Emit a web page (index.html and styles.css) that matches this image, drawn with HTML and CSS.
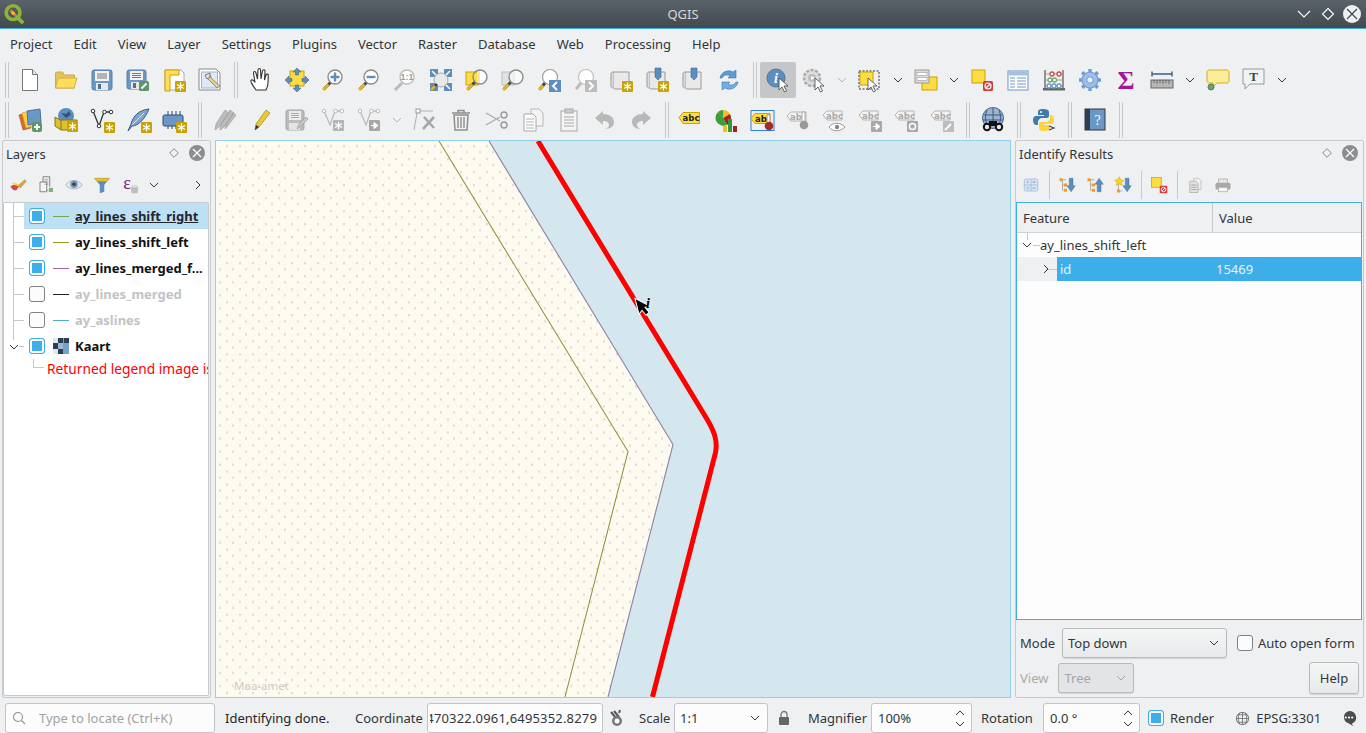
FILE: index.html
```html
<!DOCTYPE html>
<html lang="en">
<head>
<meta charset="utf-8">
<title>QGIS</title>
<link rel="stylesheet" href="styles.css">
</head>
<body>
<svg class="defs" aria-hidden="true">
  <defs>
    <g id="bd"><rect width="11" height="11" rx="1" fill="#c9a208"/><path d="M5.5 1.5v8M2 3.5l7 4M9 3.5l-7 4" stroke="#fff" stroke-width="1.3"/></g>
    <g id="bdg"><rect width="11" height="11" rx="1" fill="#b4b4b4"/><path d="M5.5 1.5v8M2 3.5l7 4M9 3.5l-7 4" stroke="#fff" stroke-width="1.3"/></g>
    <g id="mag"><path d="M10 14L3 21" stroke="#444" stroke-width="3"/><path d="M7.5 16.5L2 22" stroke="#e2b52a" stroke-width="3"/><circle cx="14" cy="9" r="7" fill="#fff" stroke="#8c8c8c" stroke-width="1.4"/></g>
    <g id="magg"><path d="M9 15L2 22" stroke="#bbb" stroke-width="3"/><circle cx="14" cy="9" r="7" fill="#fff" stroke="#bcbcbc" stroke-width="1.4"/></g>
    <g id="cur"><path d="M0 0v12l3-3 2.5 5 2-1-2.5-5h4z" fill="#fff" stroke="#444" stroke-width=".8"/></g>
    <g id="scroll"><path d="M4 4h16v17H7c-2 0-3-1-3-2z" fill="#e9e9e9" stroke="#999"/><path d="M4 4c-1 0-2 1-2 2v12c0 1 1 2 2 2" fill="#ddd" stroke="#999"/></g>
    <g id="tag"><path d="M1 9l4-4h15v9H5z" fill="#f3f3f3" stroke="#b4b4b4"/></g>
  </defs>
  <symbol id="new" viewBox="0 0 24 24"><path d="M4.5 1.5h10l5 5v16h-15z" fill="#fff" stroke="#777"/><path d="M14.5 1.5v5h5" fill="#e4e4e4" stroke="#777"/></symbol>
  <symbol id="open" viewBox="0 0 24 24"><path d="M1.5 5V20h19V7h-10l-2-3h-6z" fill="#e5c35a" stroke="#c9a94e"/><path d="M4 10h19l-3 10H1.5z" fill="#ffdc5c" stroke="#d1b04d"/></symbol>
  <symbol id="save" viewBox="0 0 24 24"><rect x="2" y="2" width="20" height="20" rx="2" fill="#6a97c6" stroke="#5a7ea6"/><rect x="5" y="3" width="14" height="10" fill="#f2f2f2"/><path d="M7 6h10M7 8h10M7 10h10" stroke="#777"/><rect x="6" y="15" width="12" height="7" fill="#e8e8e8"/><rect x="8" y="16" width="3" height="5" fill="#4f6f94"/></symbol>
  <symbol id="saveas" viewBox="0 0 24 24"><rect x="1" y="2" width="19" height="19" rx="2" fill="#6a97c6" stroke="#5a7ea6"/><rect x="4" y="3" width="13" height="9" fill="#f2f2f2"/><path d="M6 5.5h9M6 7.5h9M6 9.5h9" stroke="#777"/><rect x="5" y="14" width="11" height="7" fill="#e8e8e8"/><rect x="7" y="15" width="3" height="5" fill="#4f6f94"/><rect x="13" y="13" width="10" height="10" rx="1.5" fill="#5f9668"/><path d="M15.5 20.5l5-5" stroke="#fff" stroke-width="2"/></symbol>
  <symbol id="layoutnew" viewBox="0 0 24 24"><path d="M3 2h16l3 3v17H3z" fill="#fff" stroke="#aaa"/><path d="M3 2h14v5H8v16H3z" fill="#ffdc5c" stroke="#c9a208"/><use href="#bd" x="13" y="13"/></symbol>
  <symbol id="layouts" viewBox="0 0 24 24"><path d="M1 1h17l4 4v17H1z" fill="#fff" stroke="#888"/><rect x="3.5" y="4" width="16" height="16" fill="#dfe8f5" stroke="#9db3d8"/><path d="M12 7c-3 0-3 3-2 4l9 9 3-2-9-8c0-2-1-3-1-3z" fill="#e2d18f" stroke="#777" stroke-width=".8"/><path d="M7 7l5-2v4l-3 2z" fill="#ddd" stroke="#666" stroke-width=".8"/></symbol>
  <symbol id="pan" viewBox="0 0 24 24"><path d="M7 22c-2-3-6-8-5-9.500s3 0 4 2L4.500 5c0-2 2-2 2.500 0l1.500 6 .5-9c.3-2 2.500-2 2.500 0l.5 9 1.500-8c.5-2 2.500-1.500 2.500 0l-.5 9 1.500-5c.5-1.500 2.500-1 2.300 .5L19 15c0 3-1 5-2 7z" fill="#fff" stroke="#333" stroke-width="1.1"/></symbol>
  <symbol id="pansel" viewBox="0 0 24 24"><rect x="5" y="3" width="14" height="15" fill="#ffdc40" stroke="#c9a208"/><path d="M12 0l4 4h-2.500v3h-3V4H8zM12 24l-4-4h2.500v-3h3v3H16zM0 12l4-4v2.500h3v3H4V16zM24 12l-4 4v-2.500h-3v-3h3V8z" fill="#5d8ec0" stroke="#41698f" stroke-width=".6"/></symbol>
  <symbol id="zin" viewBox="0 0 24 24"><use href="#mag"/><path d="M14 4.5v9M9.5 9h9" stroke="#5d8ec0" stroke-width="2.400"/></symbol>
  <symbol id="zout" viewBox="0 0 24 24"><use href="#mag"/><path d="M9.5 9h9" stroke="#5d8ec0" stroke-width="2.400"/></symbol>
  <symbol id="zfull" viewBox="0 0 24 24"><path d="M1 1h8v8H1zM15 1h8v8h-8zM15 15h8v8h-8zM1 15h8v8H1z" fill="#5d8ec0"/><path d="M3 3l5 5M21 3l-5 5M21 21l-5-5" stroke="#fff" stroke-width="1.5"/><circle cx="12" cy="12" r="7" fill="#e9e9e9" stroke="#aaa"/><path d="M8 16l-6 6" stroke="#444" stroke-width="3"/><path d="M6 18l-4 4" stroke="#e2b52a" stroke-width="3"/></symbol>
  <symbol id="zsel" viewBox="0 0 24 24"><rect x="1" y="4" width="12" height="13" fill="#ffdc40" stroke="#c9a208"/><path d="M10 14L3 21" stroke="#444" stroke-width="3"/><path d="M7.5 16.5L2 22" stroke="#e2b52a" stroke-width="3"/><path d="M15 2.500a6.500 6.500 0 0 1 0 13z" fill="#fff"/><path d="M15 2.500a6.500 6.500 0 0 0 -3 .7v11.600a6.500 6.500 0 0 0 3 .7z" fill="#f3e7b0"/><circle cx="15" cy="9" r="7" fill="none" stroke="#8c8c8c" stroke-width="1.4"/></symbol>
  <symbol id="zlay" viewBox="0 0 24 24"><rect x="1" y="4" width="12" height="13" fill="#e2e2e2" stroke="#bbb"/><path d="M10 14L3 21" stroke="#444" stroke-width="3"/><path d="M7.5 16.5L2 22" stroke="#e2b52a" stroke-width="3"/><circle cx="15" cy="9" r="7" fill="#fff" fill-opacity=".6" stroke="#8c8c8c" stroke-width="1.4"/></symbol>
  <symbol id="zlast" viewBox="0 0 24 24"><path d="M8 15L3 21" stroke="#444" stroke-width="3"/><path d="M6 17.5L2 22" stroke="#e2b52a" stroke-width="3"/><circle cx="13" cy="9" r="7.5" fill="#fff" stroke="#9c9c9c" stroke-width="1.2"/><rect x="12" y="12" width="12" height="12" fill="#5d8ec0"/><path d="M20 14l-4 4 4 4" fill="none" stroke="#fff" stroke-width="2"/></symbol>
  <symbol id="znext" viewBox="0 0 24 24"><path d="M8 15L3 21" stroke="#bbb" stroke-width="3"/><circle cx="13" cy="9" r="7.5" fill="#fff" stroke="#c0c0c0" stroke-width="1.2"/><rect x="12" y="12" width="12" height="12" fill="#bcbcbc"/><path d="M16 14l4 4-4 4" fill="none" stroke="#fff" stroke-width="2"/></symbol>
  <symbol id="mapnew" viewBox="0 0 24 24"><use href="#scroll"/><use href="#bd" x="13" y="13"/></symbol>
  <symbol id="map3d" viewBox="0 0 24 24"><use href="#scroll"/><path d="M10 0h6v9l-3 3-3-3z" fill="#5d8ec0" stroke="#41698f" stroke-width=".6"/><use href="#bd" x="13" y="13"/></symbol>
  <symbol id="book" viewBox="0 0 24 24"><use href="#scroll"/><path d="M10 0h6v9l-3 3-3-3z" fill="#5d8ec0" stroke="#41698f" stroke-width=".6"/></symbol>
  <symbol id="refresh" viewBox="0 0 24 24"><path d="M3 10c1-6 8-9 13-6l3-2v8h-8l2-2c-3-2-6-1-8 2z" fill="#5d9bd6" stroke="#3f75ad" stroke-width=".6"/><path d="M21 14c-1 6-8 9-13 6l-3 2v-8h8l-2 2c3 2 6 1 8-2z" fill="#6faee2" stroke="#3f75ad" stroke-width=".6"/></symbol>
  <symbol id="idbase" viewBox="0 0 24 24"><circle cx="10" cy="10" r="9" fill="#5d8ec0" stroke="#4a739e"/></symbol>
  <symbol id="action" viewBox="0 0 24 24"><circle cx="10" cy="10" r="8" fill="#ddd" stroke="#aaa" stroke-width="2.500" stroke-dasharray="3 1.5"/><circle cx="10" cy="10" r="4" fill="#bbb"/><path d="M9 8l4 2-4 2z" fill="#fff"/><use href="#cur" x="13" y="10"/></symbol>
  <symbol id="select" viewBox="0 0 24 24"><rect x="1" y="3" width="20" height="18" fill="none" stroke="#333" stroke-dasharray="2 1.5"/><rect x="2" y="4" width="13" height="13" fill="#ffdc40" stroke="#c9a208"/><use href="#cur" x="10" y="10"/></symbol>
  <symbol id="selval" viewBox="0 0 24 24"><rect x="8" y="9" width="15" height="13" fill="#ffdc40" stroke="#c9a208"/><rect x="1" y="2" width="14" height="13" fill="#ddd" stroke="#999"/><rect x="3" y="4.5" width="10" height="3" fill="#fff" stroke="#999" stroke-width=".6"/><rect x="3" y="9.500" width="10" height="3" fill="#fff" stroke="#999" stroke-width=".6"/></symbol>
  <symbol id="desel" viewBox="0 0 24 24"><rect x="2" y="2" width="13" height="13" fill="#ffdc40" stroke="#c9a208"/><rect x="13" y="13" width="10" height="10" rx="1.5" fill="#d43c3c"/><circle cx="18" cy="18" r="3" fill="none" stroke="#fff" stroke-width="1.2"/><path d="M16 20l4-4" stroke="#fff" stroke-width="1.2"/></symbol>
  <symbol id="table" viewBox="0 0 24 24"><rect x="2" y="3" width="20" height="19" fill="#fff" stroke="#6a97c6"/><path d="M2.5 3.5h19v4h-19z" fill="#a4c1e0"/><path d="M4 10h5M11 10h9M4 13h5M11 13h9M4 16h5M11 16h9M4 19h5M11 19h9" stroke="#6a97c6"/></symbol>
  <symbol id="calc" viewBox="0 0 24 24"><path d="M3 2v19M21 2v19" stroke="#555" stroke-width="1.2"/><rect x="1" y="20" width="22" height="2.5" fill="#666"/><path d="M3 6h18M3 12h18M3 18h18" stroke="#888" stroke-width=".8"/><g fill="#fff" stroke-width="1.3"><circle cx="10" cy="6" r="2" stroke="#cc4c4c"/><circle cx="17" cy="6" r="2" stroke="#cc4c4c"/><circle cx="8" cy="12" r="2" stroke="#6fae6f"/><circle cx="12.5" cy="12" r="2" stroke="#6fae6f"/><circle cx="7" cy="18" r="2" stroke="#6a97c6"/><circle cx="12" cy="18" r="2" stroke="#6a97c6"/><circle cx="17" cy="18" r="2" stroke="#6a97c6"/></g></symbol>
  <symbol id="gear" viewBox="0 0 24 24"><path d="M12 1v22M1 12h22M4.200 4.200l15.600 15.600M19.800 4.200L4.200 19.800" stroke="#6f9bd6" stroke-width="3.400"/><circle cx="12" cy="12" r="8" fill="#9dbde6" stroke="#6f9bd6" stroke-width="1.2"/><circle cx="12" cy="12" r="3.2" fill="#e6eef8" stroke="#6f9bd6"/></symbol>
  <symbol id="ruler" viewBox="0 0 24 24"><path d="M2 6h20M2 3.5v5M22 3.5v5" stroke="#3c5e86" stroke-width="1.4"/><rect x="1" y="12" width="22" height="8" fill="#b6b6b6" stroke="#666"/><path d="M4 12v3M7 12v4M10 12v3M13 12v4M16 12v3M19 12v4" stroke="#555" stroke-width=".8"/></symbol>
  <symbol id="note" viewBox="0 0 24 24"><path d="M3 2h18c1 0 2 1 2 2v9c0 1-1 2-2 2H11l-4 4v-4H3c-1 0-2-1-2-2V4c0-1 1-2 2-2z" fill="#fdec98" stroke="#cdb024"/><circle cx="5" cy="19" r="3" fill="#6fa36f" stroke="#4e7d4e"/></symbol>
  <symbol id="tnotebase" viewBox="0 0 24 24"><path d="M1 1h21v15H8l-5 5v-5H1z" fill="#eef4f6" stroke="#999"/></symbol>
  <symbol id="dsm" viewBox="0 0 24 24"><path d="M1 7l8-2 4 15-8 2z" fill="#d86a35" stroke="#a64e26" stroke-width=".6"/><path d="M4 5l8-2 4 15-8 2z" fill="#ffd24a" stroke="#c9a208" stroke-width=".6"/><path d="M9 3l13-2 1 13-13 3z" fill="#6a97c6" stroke="#4a739e"/><rect x="14" y="14" width="10" height="10" rx="2" fill="#5f9668"/><path d="M19 16v6M16 19h6" stroke="#fff" stroke-width="2"/></symbol>
  <symbol id="gpkg" viewBox="0 0 24 24"><circle cx="12" cy="8" r="8" fill="#5d8ec0"/><path d="M7 5l5 1 3-3 2 4-5 3z" fill="#35567c"/><path d="M1 9l5 3h17v10H7l-6-4z" fill="#e0c030" stroke="#8a7414"/><path d="M7 12v10" stroke="#8a7414"/><use href="#bd" x="13" y="13"/></symbol>
  <symbol id="shp" viewBox="0 0 24 24"><path d="M3 3l6 15 5-14h7" fill="none" stroke="#333" stroke-width="1.3"/><g fill="#fff" stroke="#333"><circle cx="3" cy="3" r="1.8"/><circle cx="9" cy="18" r="1.8"/><circle cx="14.5" cy="4" r="1.8"/><circle cx="21" cy="4" r="1.8"/></g><use href="#bd" x="14" y="14"/></symbol>
  <symbol id="feather" viewBox="0 0 24 24"><path d="M23 1C13 2 7 8 5 16l-3 7 4-5c6 0 13-7 17-17z" fill="#7ea4ce" stroke="#355a86"/><path d="M18 5L6 17" stroke="#dde8f3"/><use href="#bd" x="15" y="14"/></symbol>
  <symbol id="chip" viewBox="0 0 24 24"><path d="M6 3v18M10 3v18M14 3v18M18 3v18" stroke="#2d4d72"/><rect x="1" y="7" width="20" height="11" rx="1.5" fill="#6a97c6" stroke="#2d4d72"/><use href="#bd" x="14" y="14"/></symbol>
  <symbol id="pencils" viewBox="0 0 24 24"><path d="M2 22l1-6L12 2l4 3L6 19zM7 22l1-6L17 2l4 3-10 14zM12 21l1-5 7-11 3 2-9 12z" fill="#bcbcbc" stroke="#a0a0a0" stroke-width=".7"/></symbol>
  <symbol id="pen" viewBox="0 0 24 24"><path d="M6 22l1-6L17 2l4 3L10 19z" fill="#ebc935" stroke="#a98f22" stroke-width=".8"/><path d="M6 22l1-5 3 2z" fill="#333"/></symbol>
  <symbol id="saveg" viewBox="0 0 24 24"><rect x="1" y="2" width="18" height="20" rx="2" fill="#bcbcbc" stroke="#a6a6a6"/><rect x="4" y="3" width="12" height="9" fill="#ececec"/><path d="M6 5.5h8M6 7.5h8M6 9.5h8" stroke="#aaa"/><rect x="4" y="15" width="11" height="7" fill="#e4e4e4"/><path d="M12 21l2-5 7-7 2 2-7 7z" fill="#c8c8c8" stroke="#999" stroke-width=".7"/></symbol>
  <symbol id="addf" viewBox="0 0 24 24"><path d="M3 3l6 14 5-14h7" fill="none" stroke="#bbb" stroke-width="1.3"/><g fill="#fff" stroke="#bbb"><circle cx="3" cy="3" r="1.8"/><circle cx="14.5" cy="3" r="1.8"/><circle cx="21" cy="3" r="1.8"/></g><use href="#bdg" x="12" y="12"/></symbol>
  <symbol id="movef" viewBox="0 0 24 24"><path d="M3 3l6 14 5-14h7" fill="none" stroke="#bbb" stroke-width="1.3"/><g fill="#fff" stroke="#bbb"><circle cx="3" cy="3" r="1.8"/><circle cx="14.5" cy="3" r="1.8"/><circle cx="21" cy="3" r="1.8"/></g><rect x="12" y="12" width="11" height="11" rx="1" fill="#a8a8a8"/><path d="M14 17.5h3v-3l4 3-4 3v-3" fill="#fff" stroke="#fff"/></symbol>
  <symbol id="vertex" viewBox="0 0 24 24"><path d="M6 3h14M4 5L1 22" stroke="#b0b0b0"/><rect x="3" y="1" width="4" height="4" fill="#fff" stroke="#999"/><path d="M11 9l10 11M21 9L10 21" stroke="#a8a8a8" stroke-width="2.600"/></symbol>
  <symbol id="trash" viewBox="0 0 24 24"><path d="M3 5h18M9 5V2.500h6V5" fill="none" stroke="#8e8e8e" stroke-width="1.5"/><path d="M5 7h14l-1 15H6z" fill="#f0f0f0" stroke="#8e8e8e" stroke-width="1.5"/><path d="M9 9v11M12 9v11M15 9v11" stroke="#8e8e8e" stroke-width="1.4"/></symbol>
  <symbol id="cut" viewBox="0 0 24 24"><path d="M1 5l14 8M1 17l14-8" stroke="#adadad" stroke-width="1.4"/><circle cx="19" cy="7" r="3" fill="none" stroke="#9a9a9a" stroke-width="1.4"/><circle cx="19" cy="17" r="3" fill="none" stroke="#9a9a9a" stroke-width="1.4"/></symbol>
  <symbol id="copy" viewBox="0 0 24 24"><path d="M10 1h8l4 4v13H10z" fill="#f4f4f4" stroke="#b8b8b8"/><path d="M3 6h9l3 3v14H3z" fill="#fff" stroke="#a8a8a8"/><path d="M5 11h8M5 14h8M5 17h8M5 20h8" stroke="#b0b0b0"/></symbol>
  <symbol id="paste" viewBox="0 0 24 24"><rect x="4" y="3" width="16" height="20" fill="#f4f4f4" stroke="#a8a8a8"/><rect x="8" y="1" width="8" height="4" fill="#ccc" stroke="#a8a8a8"/><path d="M7 9h10M7 12h10M7 15h10M7 18h10" stroke="#aaa"/></symbol>
  <symbol id="undo" viewBox="0 0 24 24"><path d="M10 3L2 10l8 7v-4c4 0 6 2 6 4 0 3-4 4-4 4 6 0 9-3 9-7 0-5-5-8-11-8z" fill="#b8b8b8"/></symbol>
  <symbol id="redo" viewBox="0 0 24 24"><path d="M14 3l8 7-8 7v-4c-4 0-6 2-6 4 0 3 4 4 4 4-6 0-9-3-9-7 0-5 5-8 11-8z" fill="#b8b8b8"/></symbol>
  <symbol id="abctag" viewBox="0 0 24 24"><path d="M1 9.500l4-5h16.500v11H5z" fill="#ffdc40" stroke="#c9a208"/></symbol>
  <symbol id="diagram" viewBox="0 0 24 24"><path d="M9 10V2a7.500 7.500 0 0 1 7 4z" fill="#f0c020"/><path d="M9 10l7-4a8 8 0 0 1-3 11z" fill="#a52020"/><path d="M9 10l4 7A8 8 0 0 1 4 4z" fill="#3d9c3d"/><path d="M9 10L4 4a8 8 0 0 1 5-2z" fill="#3d9c3d"/><rect x="9" y="18" width="4" height="6" fill="#f0c020"/><rect x="14" y="11" width="4" height="13" fill="#2d9a3d"/><rect x="19" y="18" width="4" height="6" fill="#a52020"/></symbol>
  <symbol id="abpinb" viewBox="0 0 24 24"><rect x="1" y="2.500" width="23" height="20" fill="none" stroke="#2f7fe0"/><path d="M1 10.500l4-5h15v10H5z" fill="#ffdc40" stroke="#c9a208"/><path d="M17 7h3v9h-3z" fill="#fff" stroke="#999"/><circle cx="19" cy="18" r="4.300" fill="#a52a2a"/></symbol>
  <symbol id="abgb" viewBox="0 0 24 24"><use href="#tag" y="-1"/><path d="M16 4h3v11h-3z" fill="#fff" stroke="#aaa"/><circle cx="18" cy="17" r="4.300" fill="#999"/></symbol>
  <symbol id="abceyeb" viewBox="0 0 24 24"><use href="#tag" y="-2"/><path d="M7 19c4-5 11-5 16 0-5 5-12 5-16 0z" fill="#fff" stroke="#999"/><circle cx="15" cy="19" r="2.200" fill="#888"/></symbol>
  <symbol id="abcmoveb" viewBox="0 0 24 24"><use href="#tag" y="-2"/><rect x="13" y="13" width="11" height="11" rx="1" fill="#a8a8a8"/><path d="M15 18.500h3v-3l4 3-4 3v-3" fill="#fff" stroke="#fff"/></symbol>
  <symbol id="abcrotb" viewBox="0 0 24 24"><use href="#tag" y="-2"/><rect x="13" y="13" width="11" height="11" rx="1" fill="#a8a8a8"/><circle cx="18.500" cy="18.500" r="3" fill="none" stroke="#fff" stroke-width="1.5"/></symbol>
  <symbol id="abcpenb" viewBox="0 0 24 24"><use href="#tag" y="-2"/><rect x="13" y="13" width="11" height="11" rx="1" fill="#bcbcbc"/><path d="M15 22l6-6" stroke="#fff" stroke-width="2"/></symbol>
  <symbol id="meta" viewBox="0 0 24 24"><circle cx="12" cy="10" r="10.500" fill="#9ab4d2" stroke="#46648a"/><path d="M3 7h18M2 12h20M12 0v18M6 2c-2 5-2 11 0 15M18 2c2 5 2 11 0 15" stroke="#3a5a80" stroke-width="1" fill="none"/><circle cx="6" cy="19" r="4.200" fill="#111"/><circle cx="18" cy="19" r="4.200" fill="#111"/><path d="M8 13h8v5H8z" fill="#111"/><circle cx="6" cy="19" r="2.200" fill="#e8e8e8"/><circle cx="18" cy="19" r="2.200" fill="#e8e8e8"/></symbol>
  <symbol id="python" viewBox="0 0 24 24"><path d="M11 1c-4 0-5 1-5 3v3h6v1H4c-2 0-3 2-3 4s1 5 3 5h2v-3c0-2 2-4 4-4h5c1 0 2-1 2-2V4c0-2-2-3-6-3z" fill="#3f7cad"/><path d="M12 23c4 0 6-1 6-3v-3h-6v-1h7c2 0 3-2 3-4s-1-5-3-5h-1v3c0 2-2 4-4 4H9c-1 0-2 1-2 2v4c0 2 1 3 5 3z" fill="#ffd43b"/><circle cx="9" cy="4" r="1" fill="#fff"/><path d="M17 18l5 2-5 2" fill="none" stroke="#444" stroke-width="1.2"/></symbol>
  <symbol id="helpb" viewBox="0 0 24 24"><rect x="2" y="1" width="20" height="21" fill="#6a97c6" stroke="#31363b"/><rect x="2" y="1" width="5" height="21" fill="#2c3e50"/></symbol>
  <symbol id="collapse" viewBox="0 0 24 24"><rect x="3" y="4" width="18" height="16" rx="2" fill="#d7e4f2" stroke="#9db8d6"/><path d="M12 4v16M3 12h18" stroke="#9db8d6"/><path d="M6 8h3M6 16h3M14 8h4M14 16h4" stroke="#5d8ec0"/></symbol>
  <symbol id="expandall" viewBox="0 0 24 24"><path d="M3 5h8M6 5v14h5M6 12h5" fill="none" stroke="#999"/><rect x="2" y="3" width="4" height="4" fill="#f59a2c"/><rect x="8" y="10" width="4" height="4" fill="#f59a2c"/><rect x="8" y="17" width="4" height="4" fill="#f59a2c"/><path d="M15 3h5v10h3l-5.500 8L12 13h3z" fill="#5d8ec0" stroke="#41698f" stroke-width=".6"/></symbol>
  <symbol id="collapseall" viewBox="0 0 24 24"><path d="M3 5h8M6 5v14h5M6 12h5" fill="none" stroke="#999"/><rect x="2" y="3" width="4" height="4" fill="#f59a2c"/><rect x="8" y="10" width="4" height="4" fill="#f59a2c"/><rect x="8" y="17" width="4" height="4" fill="#f59a2c"/><path d="M15 21h5V11h3L17.500 3 12 11h3z" fill="#5d8ec0" stroke="#41698f" stroke-width=".6"/></symbol>
  <symbol id="expandnew" viewBox="0 0 24 24"><path d="M6 8v12h5" fill="none" stroke="#999"/><rect x="4" y="18" width="4" height="4" fill="#f59a2c"/><path d="M7 1l2 4 4 .5-3 3 1 4-4-2-4 2 1-4-3-3 4-.5z" fill="#ffd21e" stroke="#c9a208" stroke-width=".6"/><path d="M15 3h5v10h3l-5.500 8L12 13h3z" fill="#5d8ec0" stroke="#41698f" stroke-width=".6"/></symbol>
  <symbol id="copyr" viewBox="0 0 24 24"><path d="M10 3h7l3 3v12H10z" fill="#eee" stroke="#bbb"/><path d="M5 7h8l3 3v12H5z" fill="#e2e2e2" stroke="#aaa"/><path d="M7 12h7M7 15h7M7 18h7" stroke="#999"/></symbol>
  <symbol id="print" viewBox="0 0 24 24"><path d="M6 4h12v6H6z" fill="#e6e6e6" stroke="#aaa"/><rect x="2" y="9" width="20" height="9" rx="2" fill="#a8a8a8"/><rect x="6" y="15" width="12" height="6" fill="#f4f4f4" stroke="#aaa"/></symbol>
  <symbol id="brush" viewBox="0 0 24 24"><path d="M2 14c4-3 8-3 11 0l-3 5c-3 0-6-1-8-5z" fill="#e34234"/><path d="M2 14c3 2 5 4 8 5l-4 0z" fill="#4a7fc0"/><path d="M12 13l9-8 2 2-8 9z" fill="#d9a93a" stroke="#a67c1d" stroke-width=".6"/><path d="M5 10l8 2" stroke="#ffd24a" stroke-width="2.500"/></symbol>
  <symbol id="addgroup" viewBox="0 0 24 24"><path d="M8 1h9v18H8z" fill="#eee" stroke="#666"/><path d="M4 8h9v13H4z" fill="#f4f4f4" stroke="#666"/><path d="M10 5h5M10 8h5M10 11h5" stroke="#888"/><rect x="15" y="15" width="7" height="7" fill="#7fb27f" stroke="#fff"/></symbol>
  <symbol id="eye" viewBox="0 0 24 24"><path d="M1 12c5-8 17-8 22 0-5 7-17 7-22 0z" fill="#e4e8ee" stroke="#a0a8b2"/><circle cx="12" cy="11" r="5" fill="#7a96b6"/><circle cx="12" cy="11" r="2.300" fill="#2d3f55"/></symbol>
  <symbol id="filter" viewBox="0 0 24 24"><path d="M2 3h20l-7 9v9l-6 2V12z" fill="#5d8ec0"/><path d="M2 3h20l-3 4H5z" fill="#f0c020" stroke="#b89414" stroke-width=".6"/></symbol>
  <symbol id="exprb" viewBox="0 0 24 24"><path d="M13 15h10l-1 8h-8z" fill="#bdbdbd"/><path d="M15 15v-2h6v2" fill="none" stroke="#bdbdbd"/></symbol>
</svg>

<header class="titlebar">
  <span class="title-left">
    <svg class="qlogo" viewBox="0 0 24 24"><circle cx="11" cy="10.500" r="7.500" fill="none" stroke="#8ab43a" stroke-width="4"/><path d="M14 14l8 8" stroke="#8ab43a" stroke-width="4"/><path d="M8 8l6 6" stroke="#e47b2a" stroke-width="3"/><circle cx="11" cy="11" r="2" fill="#e8c43a"/></svg>
  </span>
  <span class="title-text">QGIS</span>
  <span class="title-right">
    <svg class="wbtn" viewBox="0 0 16 16"><path d="M2 5l6 6 6-6" fill="none" stroke="#fff" stroke-width="1.1"/></svg>
    <svg class="wbtn" viewBox="0 0 16 16"><path d="M8 2.500L13.500 8 8 13.500 2.500 8z" fill="none" stroke="#fff" stroke-width="1.1"/></svg>
    <svg class="wclose" viewBox="0 0 18 18"><circle cx="9" cy="9" r="9" fill="#eff0f1"/><path d="M4 4l10 10M14 4L4 14" stroke="#3f464c" stroke-width="1.2"/></svg>
  </span>
</header>

<nav class="menubar">
  <span class="menu">Project</span><span class="menu">Edit</span><span class="menu">View</span><span class="menu">Layer</span><span class="menu">Settings</span><span class="menu">Plugins</span><span class="menu">Vector</span><span class="menu">Raster</span><span class="menu">Database</span><span class="menu">Web</span><span class="menu">Processing</span><span class="menu">Help</span>
</nav>

<div class="toolbar">
  <i class="grip first"></i>
  <span class="tb"><svg class="ic"><use href="#new"/></svg></span>
  <span class="tb"><svg class="ic"><use href="#open"/></svg></span>
  <span class="tb"><svg class="ic"><use href="#save"/></svg></span>
  <span class="tb"><svg class="ic"><use href="#saveas"/></svg></span>
  <span class="tb"><svg class="ic"><use href="#layoutnew"/></svg></span>
  <span class="tb"><svg class="ic"><use href="#layouts"/></svg></span>
  <i class="grip"></i>
  <span class="tb"><svg class="ic"><use href="#pan"/></svg></span>
  <span class="tb"><svg class="ic"><use href="#pansel"/></svg></span>
  <span class="tb"><svg class="ic"><use href="#zin"/></svg></span>
  <span class="tb"><svg class="ic"><use href="#zout"/></svg></span>
  <span class="tb"><svg class="ic"><use href="#magg"/><text x="14" y="12" class="t-11">1:1</text></svg></span>
  <span class="tb"><svg class="ic"><use href="#zfull"/></svg></span>
  <span class="tb"><svg class="ic"><use href="#zsel"/></svg></span>
  <span class="tb"><svg class="ic"><use href="#zlay"/></svg></span>
  <span class="tb"><svg class="ic"><use href="#zlast"/></svg></span>
  <span class="tb"><svg class="ic"><use href="#znext"/></svg></span>
  <span class="tb"><svg class="ic"><use href="#mapnew"/></svg></span>
  <span class="tb"><svg class="ic"><use href="#map3d"/></svg></span>
  <span class="tb"><svg class="ic"><use href="#book"/></svg></span>
  <span class="tb"><svg class="ic"><use href="#refresh"/></svg></span>
  <i class="grip tight"></i>
  <span class="tb active"><svg class="ic"><use href="#idbase"/><text x="10" y="15" class="t-i">i</text><use href="#cur" x="13" y="10"/></svg></span>
  <span class="tb"><svg class="ic"><use href="#action"/></svg></span>
  <span class="chev dim"><svg viewBox="0 0 10 6"><path d="M1 1l4 4 4-4"/></svg></span>
  <span class="tb"><svg class="ic"><use href="#select"/></svg></span>
  <span class="chev"><svg viewBox="0 0 10 6"><path d="M1 1l4 4 4-4"/></svg></span>
  <span class="tb"><svg class="ic"><use href="#selval"/></svg></span>
  <span class="chev"><svg viewBox="0 0 10 6"><path d="M1 1l4 4 4-4"/></svg></span>
  <span class="tb"><svg class="ic"><use href="#desel"/></svg></span>
  <span class="tb"><svg class="ic"><use href="#table"/></svg></span>
  <span class="tb"><svg class="ic"><use href="#calc"/></svg></span>
  <span class="tb"><svg class="ic"><use href="#gear"/></svg></span>
  <span class="tb"><svg class="ic"><text x="12" y="21" class="t-sigma">Σ</text></svg></span>
  <span class="tb"><svg class="ic"><use href="#ruler"/></svg></span>
  <span class="chev"><svg viewBox="0 0 10 6"><path d="M1 1l4 4 4-4"/></svg></span>
  <span class="tb"><svg class="ic"><use href="#note"/></svg></span>
  <span class="tb"><svg class="ic"><use href="#tnotebase"/><text x="11.500" y="13" class="t-t">T</text></svg></span>
  <span class="chev"><svg viewBox="0 0 10 6"><path d="M1 1l4 4 4-4"/></svg></span>
</div>

<div class="toolbar">
  <i class="grip first"></i>
  <span class="tb"><svg class="ic"><use href="#dsm"/></svg></span>
  <span class="tb"><svg class="ic"><use href="#gpkg"/></svg></span>
  <span class="tb"><svg class="ic"><use href="#shp"/></svg></span>
  <span class="tb"><svg class="ic"><use href="#feather"/></svg></span>
  <span class="tb"><svg class="ic"><use href="#chip"/></svg></span>
  <i class="grip"></i>
  <span class="tb"><svg class="ic"><use href="#pencils"/></svg></span>
  <span class="tb"><svg class="ic"><use href="#pen"/></svg></span>
  <span class="tb"><svg class="ic"><use href="#saveg"/></svg></span>
  <span class="tb"><svg class="ic"><use href="#addf"/></svg></span>
  <span class="tb"><svg class="ic"><use href="#movef"/></svg></span>
  <span class="chev dim"><svg viewBox="0 0 10 6"><path d="M1 1l4 4 4-4"/></svg></span>
  <span class="tb"><svg class="ic"><use href="#vertex"/></svg></span>
  <span class="tb"><svg class="ic"><use href="#trash"/></svg></span>
  <span class="tb"><svg class="ic"><use href="#cut"/></svg></span>
  <span class="tb"><svg class="ic"><use href="#copy"/></svg></span>
  <span class="tb"><svg class="ic"><use href="#paste"/></svg></span>
  <span class="tb"><svg class="ic"><use href="#undo"/></svg></span>
  <span class="tb"><svg class="ic"><use href="#redo"/></svg></span>
  <i class="grip tight"></i>
  <span class="tb"><svg class="ic"><use href="#abctag"/><text x="13" y="13" class="t-tag">abc</text></svg></span>
  <span class="tb"><svg class="ic"><use href="#diagram"/></svg></span>
  <span class="tb"><svg class="ic"><use href="#abpinb"/><text x="11" y="13.500" class="t-tag">ab</text></svg></span>
  <span class="tb"><svg class="ic"><use href="#abgb"/><text x="10" y="11.500" class="t-tag dim">ab</text></svg></span>
  <span class="tb"><svg class="ic"><use href="#abceyeb"/><text x="12.500" y="10.500" class="t-tag dim">abc</text></svg></span>
  <span class="tb"><svg class="ic"><use href="#abcmoveb"/><text x="12.500" y="10.500" class="t-tag dim">abc</text></svg></span>
  <span class="tb"><svg class="ic"><use href="#abcrotb"/><text x="12.500" y="10.500" class="t-tag dim">abc</text></svg></span>
  <span class="tb"><svg class="ic"><use href="#abcpenb"/><text x="12.500" y="10.500" class="t-tag dim">abc</text></svg></span>
  <i class="grip"></i>
  <span class="tb"><svg class="ic"><use href="#meta"/></svg></span>
  <i class="grip"></i>
  <span class="tb"><svg class="ic"><use href="#python"/></svg></span>
  <i class="grip"></i>
  <span class="tb"><svg class="ic"><use href="#helpb"/><text x="14.500" y="16.500" class="t-q">?</text></svg></span>
  <i class="grip"></i>
</div>

<main class="workspace">
  <section class="dock layers">
    <div class="dock-title">
      <span class="dock-name">Layers</span>
      <svg class="float" viewBox="0 0 10 10"><path d="M5 .7L9.300 5 5 9.300 .7 5z"/></svg>
      <svg class="close" viewBox="0 0 16 16"><circle cx="8" cy="8" r="8"/><path d="M4 4l8 8M12 4l-8 8"/></svg>
    </div>
    <div class="dock-tools">
      <span class="dt w28"><svg class="ic18"><use href="#brush"/></svg></span>
      <span class="dt w28"><svg class="ic18"><use href="#addgroup"/></svg></span>
      <span class="dt w28"><svg class="ic18"><use href="#eye"/></svg></span>
      <span class="dt w28"><svg class="ic18"><use href="#filter"/></svg></span>
      <span class="dt w28"><svg class="ic18" viewBox="0 0 24 24"><text x="8" y="17" class="t-eps">ε</text><use href="#exprb"/></svg></span>
      <span class="chev small"><svg viewBox="0 0 10 6"><path d="M1 1l4 4 4-4"/></svg></span>
      <span class="dock-spacer"></span>
      <span class="chev right"><svg viewBox="0 0 6 10"><path d="M1 1l4 4-4 4"/></svg></span>
    </div>
    <div class="layer-tree">
      <div class="lrow sel"><i class="branch"></i><span class="lbody"><i class="check on"></i><i class="sym c-green"></i><span class="lname under">ay_lines_shift_right</span></span></div>
      <div class="lrow"><i class="branch"></i><span class="lbody"><i class="check on"></i><i class="sym c-olive"></i><span class="lname">ay_lines_shift_left</span></span></div>
      <div class="lrow"><i class="branch"></i><span class="lbody"><i class="check on"></i><i class="sym c-purple"></i><span class="lname">ay_lines_merged_f...</span></span></div>
      <div class="lrow"><i class="branch"></i><span class="lbody"><i class="check"></i><i class="sym c-black"></i><span class="lname off">ay_lines_merged</span></span></div>
      <div class="lrow"><i class="branch"></i><span class="lbody"><i class="check"></i><i class="sym c-teal"></i><span class="lname off">ay_aslines</span></span></div>
      <div class="lrow"><i class="branch last"><svg viewBox="0 0 10 6"><path d="M1 1l4 4 4-4"/></svg></i><span class="lbody"><i class="check on"></i>
        <svg class="raster" viewBox="0 0 16 16"><rect width="16" height="16" fill="#7ba0c8"/><rect width="5" height="5" x="5" fill="#2d3f55"/><rect width="5" height="5" x="11" fill="#2d3f55"/><rect width="5" height="6" y="5" fill="#2d3f55"/><rect width="5" height="6" x="5" y="5" fill="#9bb8d6"/><rect width="5" height="5" x="5" y="11" fill="#2d3f55"/><rect width="5" height="5" y="11" fill="#dfe7ef"/><rect width="5" height="5" fill="#dfe7ef"/></svg>
        <span class="lname">Kaart</span></span></div>
      <div class="legend"><i class="legend-line"></i><span class="legend-text">Returned legend image is invalid</span></div>
    </div>
  </section>

  <section class="map">
    <svg class="map-svg" viewBox="216 141 794 555" preserveAspectRatio="none">
      <defs>
        <pattern id="dots" width="13" height="13" patternUnits="userSpaceOnUse">
          <rect x="5" y="2" width="2" height="2" fill="#ded9d6"/>
          <rect x="11" y="8" width="2" height="2" fill="#ded9d6"/>
        </pattern>
      </defs>
      <rect x="216" y="141" width="794" height="555" fill="#d4e7ef"/>
      <path d="M216 141H489L673 444 608 696H216z" fill="#fdfaf0"/>
      <path d="M216 141H489L673 444 608 696H216z" fill="url(#dots)"/>
      <path d="M489 141L673 444 608 696" fill="none" stroke="#8f80a3" stroke-width="1.1"/>
      <path d="M439 141L628 451 565 696" fill="none" stroke="#8d8d30" stroke-width="1"/>
      <path d="M538 141L706 417C714 430 718 440 715.500 452L652.500 696" fill="none" stroke="#ff0000" stroke-width="5"/>
      <path d="M635 298L639 314 642 310 646 315 649 312 645 307 650 306z" fill="#000" stroke="#fff" stroke-width="1"/>
      <text x="646" y="308" class="t-cur">i</text>
    </svg>
    <span class="attribution">Maa-amet</span>
  </section>

  <section class="dock identify">
    <div class="dock-title">
      <span class="dock-name">Identify Results</span>
      <svg class="float" viewBox="0 0 10 10"><path d="M5 .7L9.300 5 5 9.300 .7 5z"/></svg>
      <svg class="close" viewBox="0 0 16 16"><circle cx="8" cy="8" r="8"/><path d="M4 4l8 8M12 4l-8 8"/></svg>
    </div>
    <div class="dock-tools id-tools">
      <span class="dt w28"><svg class="ic18"><use href="#collapse"/></svg></span>
      <i class="vsep"></i>
      <span class="dt w28"><svg class="ic18"><use href="#expandall"/></svg></span>
      <span class="dt w28"><svg class="ic18"><use href="#collapseall"/></svg></span>
      <span class="dt w28"><svg class="ic18"><use href="#expandnew"/></svg></span>
      <i class="vsep"></i>
      <span class="dt w28"><svg class="ic18"><use href="#desel"/></svg></span>
      <i class="vsep"></i>
      <span class="dt w28"><svg class="ic18"><use href="#copyr"/></svg></span>
      <span class="dt w28"><svg class="ic18"><use href="#print"/></svg></span>
    </div>
    <div class="result-tree">
      <div class="rhead"><span class="rh-f">Feature</span><span class="rh-v">Value</span></div>
      <div class="rrow"><i class="rbranch"><svg viewBox="0 0 10 6"><path d="M1 1l4 4 4-4"/></svg></i><span class="rname">ay_lines_shift_left</span></div>
      <div class="rrow child"><i class="rbranch deep"><svg viewBox="0 0 6 10"><path d="M1 1l4 4-4 4"/></svg></i><span class="rsel"><span class="rid">id</span><span class="rval">15469</span></span></div>
    </div>
    <div class="id-form">
      <div class="form-row">
        <span class="flabel">Mode</span>
        <span class="combo mode">Top down<svg viewBox="0 0 10 6"><path d="M1 1l4 4 4-4"/></svg></span>
        <i class="check auto"></i>
        <span class="flabel">Auto open form</span>
      </div>
      <div class="form-row second">
        <span class="flabel dis">View</span>
        <span class="combo view">Tree<svg viewBox="0 0 10 6"><path d="M1 1l4 4 4-4"/></svg></span>
        <span class="dock-spacer"></span>
        <span class="button">Help</span>
      </div>
    </div>
  </section>
</main>

<footer class="statusbar">
  <span class="field locator">
    <svg class="search" viewBox="0 0 14 14"><circle cx="6" cy="6" r="4.500"/><path d="M9.500 9.500L13 13"/></svg>
    <span class="ph">Type to locate (Ctrl+K)</span>
  </span>
  <span class="stxt msg">Identifying done.</span>
  <span class="stxt coord-l">Coordinate</span>
  <span class="field coord"><span class="clip"><span class="coord-val">470322.0961,6495352.8279</span></span></span>
  <svg class="togglecoord" viewBox="0 0 16 18"><path d="M3 3l5 6M6 2l5 6M12 1l-1 3" stroke="#555" stroke-width="2" fill="none"/><circle cx="9" cy="12" r="5" fill="#777"/><circle cx="9" cy="12" r="2.500" fill="#fff"/></svg>
  <span class="stxt scale-l">Scale</span>
  <span class="field scale">1:1<svg viewBox="0 0 10 6"><path d="M1 1l4 4 4-4"/></svg></span>
  <svg class="lock" viewBox="0 0 12 16"><path d="M3 7V4.500a3 3 0 0 1 6 0V7" fill="none" stroke="#777" stroke-width="1.3"/><rect x="1" y="7" width="10" height="8" rx="1" fill="#666"/></svg>
  <span class="stxt mag-l">Magnifier</span>
  <span class="field spin mag">100%<span class="arrows"><svg viewBox="0 0 10 6"><path d="M1 5l4-4 4 4"/></svg><svg viewBox="0 0 10 6"><path d="M1 1l4 4 4-4"/></svg></span></span>
  <span class="stxt rot-l">Rotation</span>
  <span class="field spin rot">0.0 °<span class="arrows"><svg viewBox="0 0 10 6"><path d="M1 5l4-4 4 4"/></svg><svg viewBox="0 0 10 6"><path d="M1 1l4 4 4-4"/></svg></span></span>
  <i class="check on render"></i>
  <span class="stxt">Render</span>
  <svg class="globe" viewBox="0 0 16 16"><circle cx="8" cy="8" r="6.500" fill="none" stroke="#666"/><path d="M1.500 8h13M8 1.500v13M3 4h10M3 12h10M5 2c-2 4-2 8 0 12M11 2c2 4 2 8 0 12" fill="none" stroke="#666" stroke-width=".8"/></svg>
  <span class="stxt epsg">EPSG:3301</span>
  <svg class="chat" viewBox="0 0 16 16"><path d="M8 1a7 6.500 0 0 1 3 12.400L12 16l-4-2.500A7 6.500 0 0 1 8 1z" fill="#4d4d4d"/><circle cx="4.800" cy="7.500" r="1.100" fill="#fff"/><circle cx="8" cy="7.500" r="1.100" fill="#fff"/><circle cx="11.200" cy="7.500" r="1.100" fill="#fff"/></svg>
</footer>
</body>
</html>
```

FILE: styles.css
```css
* { box-sizing: border-box; }
html, body { margin: 0; padding: 0; }
body {
  width: 1366px;
  height: 733px;
  overflow: hidden;
  display: flex;
  flex-direction: column;
  background: #eff0f1;
  color: #31363b;
  font: 13px/18px "Noto Sans", sans-serif;
}
i { display: block; font-style: normal; }
.defs { position: absolute; width: 0; height: 0; overflow: hidden; }
symbol { overflow: visible; }

.t-11 { font: 700 9px "Liberation Sans", sans-serif; text-anchor: middle; fill: #9c9c9c; }
.t-i { font: italic 700 14px "Liberation Serif", serif; text-anchor: middle; fill: #fff; }
.t-sigma { font: 700 26px "Liberation Serif", serif; text-anchor: middle; fill: #a2169c; }
.t-t { font: 700 13px "Liberation Serif", serif; text-anchor: middle; fill: #444; }
.t-tag { font: 700 8.5px "DejaVu Sans", sans-serif; text-anchor: middle; fill: #222; }
.t-tag.dim { fill: #aaa; }
.t-q { font: 14px "Liberation Serif", serif; text-anchor: middle; fill: #fff; }
.t-eps { font: 24px "Liberation Serif", serif; text-anchor: middle; fill: #6d2a80; }
.t-cur { font: italic 700 14px "Liberation Serif", serif; fill: #000; }

.titlebar {
  height: 29px;
  flex: none;
  display: grid;
  grid-template-columns: 1fr auto 1fr;
  align-items: center;
  background: linear-gradient(#5a6269, #42494f);
  border-bottom: 1px solid #3daee9;
  color: #d6d8da;
}
.title-left { display: flex; padding-left: 3px; }
.qlogo { width: 22px; height: 22px; }
.title-right { display: flex; justify-content: flex-end; align-items: center; gap: 8px; padding-right: 5px; }
.wbtn { width: 16px; height: 16px; }
.wclose { width: 18px; height: 18px; margin-left: -1px; }

.menubar { height: 30px; flex: none; display: flex; align-items: center; }
.menu { padding: 0 10.5px; }
.menu:first-child { padding-left: 10px; }

.toolbar { height: 40px; flex: none; display: flex; align-items: center; padding-top: 1px; }
.grip {
  width: 4px;
  height: 36px;
  margin: 0 5px 0 6px;
  border-left: 1px solid #c6c7c9;
  border-right: 1px solid #c6c7c9;
}
.grip.first { margin-left: 5px; margin-right: 3px; }
.grip.tight { margin-right: 3px; }
.tb { width: 36px; height: 36px; flex: none; display: flex; align-items: center; justify-content: center; }
.tb.active { background: #c5c6c8; border-radius: 2px; }
.ic { width: 24px; height: 24px; overflow: visible; }
.ic18 { width: 18px; height: 18px; overflow: visible; }
.chev { width: 20px; height: 36px; flex: none; display: flex; align-items: center; justify-content: center; }
.chev svg { width: 10px; height: 6px; }
.chev.right svg { width: 6px; height: 10px; }
svg path[d^="M1 1l4"], svg path[d^="M1 5l4"] { fill: none; stroke: #31363b; stroke-width: 1; }
.chev.dim svg path { stroke: #b4b6b8; }

.workspace { height: 559px; flex: none; display: flex; gap: 4px; padding: 1px 2px 0; }
.dock { display: flex; flex-direction: column; border: 1px solid #c8c9cb; border-radius: 2px; }
.layers { width: 209px; }
.identify { width: 349px; }
.map { width: 796px; height: 558px; position: relative; border: 1px solid #93cfe9; overflow: hidden; }
.map-svg { display: block; width: 794px; height: 556px; }
.attribution { position: absolute; left: 18px; bottom: 2px; font-size: 11.5px; color: #cfcac4; }

.dock-title { height: 27px; display: flex; align-items: center; padding: 0 5px 2px 3px; flex: none; }
.dock-name { flex: 1; }
.float { width: 10px; height: 10px; margin: -1px 10px 0 0; }
.float path { fill: none; stroke: #6e7275; stroke-width: .8; }
.close { width: 16px; height: 16px; margin-top: -1px; }
.close circle { fill: #8b8d8f; }
.close path { stroke: #fff; stroke-width: 1.3; }

.dock-tools { height: 34px; flex: none; display: flex; align-items: center; padding-left: 1px; }
.dt { height: 30px; display: flex; align-items: center; justify-content: center; flex: none; }
.w28 { width: 28px; }
.chev.small { width: 20px; height: 30px; }
.chev.right { width: 24px; height: 30px; }
.dock-spacer { flex: 1; }
.vsep { width: 1px; height: 28px; background: #c8c9cb; margin: 0 3px 0 4px; flex: none; }

.layer-tree { flex: 1; background: #fff; overflow: hidden; margin: 0 1px 1px 0; border: 1px solid #c8c9cb; border-radius: 2px; }
.lrow { height: 26px; display: flex; }
.branch {
  width: 20px;
  flex: none;
  position: relative;
  background:
    linear-gradient(#c6c7c9, #c6c7c9) 9px 0 / 1px 100% no-repeat,
    linear-gradient(#c6c7c9, #c6c7c9) 9px 13px / 11px 1px no-repeat;
}
.branch.last { background: linear-gradient(#c6c7c9, #c6c7c9) 9px 0 / 1px 7px no-repeat, linear-gradient(#c6c7c9, #c6c7c9) 15px 13px / 5px 1px no-repeat; }
.branch.last svg { position: absolute; left: 5px; top: 11px; width: 10px; height: 6px; }
.lbody { flex: 1; display: flex; align-items: center; min-width: 0; padding-left: 5px; }
.lrow.sel .lbody { background: #bde0f5; }
.check {
  width: 16px;
  height: 16px;
  flex: none;
  border: 1px solid #7f8284;
  border-radius: 3px;
  background: #fcfcfc;
}
.check.on { border: 1px solid #3daee9; background: #3daee9; box-shadow: inset 0 0 0 2px #fcfcfc; }
.sym { width: 16px; height: 1px; margin: 0 6px 0 8px; flex: none; }
.raster { width: 16px; height: 16px; margin: 0 6px 0 8px; flex: none; }
.c-green { background: #78a352; }
.c-olive { background: #999a28; }
.c-purple { background: #ad629f; }
.c-black { background: #222; }
.c-teal { background: #4fb0b8; }
.lname { font-weight: 700; color: #111; white-space: nowrap; }
.lname.off { color: #c2c3c4; }
.lname.under { text-decoration: underline; color: #232629; }
.legend { height: 22px; display: flex; white-space: nowrap; }
.legend-line { width: 11px; height: 9px; margin: 0 3px 0 29px; border-left: 1px solid #c6c7c9; border-bottom: 1px solid #c6c7c9; flex: none; }
.legend-text { color: #ff0000; overflow: hidden; padding-top: 1px; font-size: 13.76px; }

.result-tree { flex: 1; margin-right: 1px; background: #fdfdfd; border: 1px solid #3daee9; display: flex; flex-direction: column; }
.rhead { height: 30px; flex: none; display: flex; align-items: center; background: #eff0f1; border-bottom: 1px solid #d0d1d2; }
.rh-f { width: 196px; padding-left: 6px; height: 100%; display: flex; align-items: center; border-right: 1px solid #c8c9cb; }
.rh-v { padding-left: 6px; }
.rrow { height: 24px; display: flex; align-items: center; }
.rbranch {
  flex: none;
  width: 23px;
  height: 24px;
  position: relative;
  background: linear-gradient(#c6c7c9, #c6c7c9) 10px 0 / 1px 7px no-repeat, linear-gradient(#c6c7c9, #c6c7c9) 16px 12px / 7px 1px no-repeat;
}
.rbranch svg { position: absolute; left: 5px; top: 9px; width: 10px; height: 6px; }
.rbranch.deep {
  width: 40px;
  background: #eff0f1 linear-gradient(#c6c7c9, #c6c7c9) 29px 12px / 11px 1px no-repeat;
}
.rbranch.deep svg { left: 26px; top: 7px; width: 6px; height: 10px; }
.rname { color: #31363b; }
.rsel { flex: 1; height: 24px; display: flex; align-items: center; background: #3daee9; color: #e8f4fb; }
.rid { width: 159px; padding-left: 3px; }

.id-form { flex: none; padding: 7px 4px 3px; display: flex; flex-direction: column; }
.form-row { display: flex; align-items: center; height: 32px; }
.form-row.second { margin-top: 3px; }
.flabel { white-space: nowrap; }
.flabel.dis { color: #a9abad; }
.combo {
  height: 30px;
  display: flex;
  align-items: center;
  justify-content: space-between;
  padding: 0 7px 0 5px;
  border: 1px solid #b8babb;
  border-radius: 3px;
  background: linear-gradient(#f4f5f5, #e8e9ea);
  box-shadow: 0 1px 1px rgba(0,0,0,.12);
}
.combo svg { width: 10px; height: 6px; }
.mode { width: 165px; margin: 0 10px 0 7px; }
.check.auto { margin-right: 5px; }
.view { width: 76px; margin-left: 10px; background: #e3e4e5; color: #a4a6a8; }
.view svg path { stroke: #a4a6a8; }
.button {
  width: 50px;
  height: 32px;
  display: flex;
  align-items: center;
  justify-content: center;
  border: 1px solid #b8babb;
  border-radius: 3px;
  background: linear-gradient(#f4f5f5, #e8e9ea);
  box-shadow: 0 1px 1px rgba(0,0,0,.12);
}

.statusbar { flex: 1; display: flex; align-items: center; padding: 5px 0 0 5px; white-space: nowrap; }
.field {
  height: 30px;
  display: flex;
  align-items: center;
  background: #fcfcfc;
  border: 1px solid #c2c4c6;
  border-radius: 3px;
  flex: none;
}
.locator { width: 210px; }
.search { width: 14px; height: 14px; margin: 0 13px 0 6px; }
.search circle, .search path { fill: none; stroke: #8e9194; stroke-width: 1.1; }
.ph { color: #a0a2a4; }
.stxt { flex: none; }
.msg { margin-left: 10px; color: #232629; width: 130px; }
.coord-l { width: 72px; }
.coord { width: 176px; padding: 0 5px 0 2px; }
.clip { flex: 1; min-width: 0; display: flex; justify-content: flex-end; overflow: hidden; }
.coord-val { flex: none; letter-spacing: .17px; }
.togglecoord { width: 16px; height: 18px; margin: 0 15px 0 5px; flex: none; }
.scale-l { width: 35px; }
.scale { width: 94px; padding-left: 5px; justify-content: space-between; padding-right: 7px; }
.scale svg { width: 10px; height: 6px; }
.lock { width: 12px; height: 16px; margin: 0 18px 0 10px; flex: none; }
.mag-l { width: 63px; }
.spin { padding: 0 6px; justify-content: space-between; }
.mag { width: 101px; }
.rot-l { margin-left: 9px; width: 62px; }
.rot { width: 97px; }
.arrows { display: flex; flex-direction: column; gap: 5px; }
.arrows svg { display: block; width: 10px; height: 6px; }
.check.render { margin: 0 6px 0 8px; }
.globe { width: 15px; height: 15px; margin: 0 6px 0 21px; flex: none; }
.epsg { width: 85px; }
.chat { width: 16px; height: 16px; flex: none; }
```
